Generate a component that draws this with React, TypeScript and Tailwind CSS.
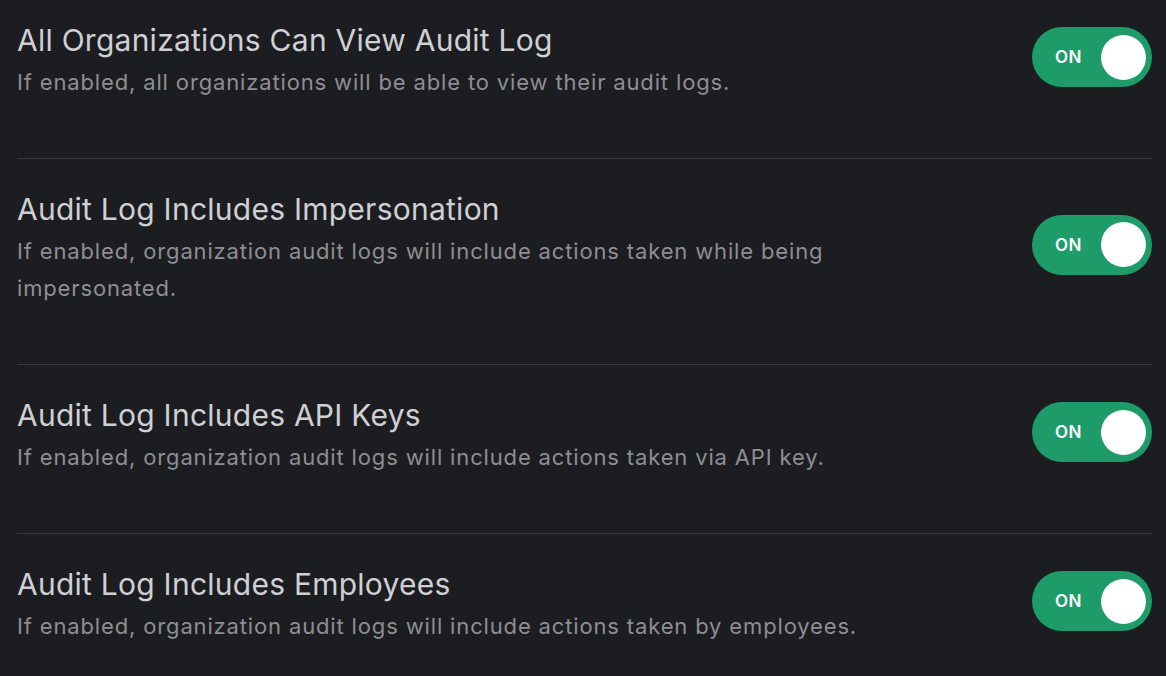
import { useState } from "react";

const SETTINGS: { title: string; description: string }[] = [
  {
    title: "All Organizations Can View Audit Log",
    description: "If enabled, all organizations will be able to view their audit logs.",
  },
  {
    title: "Audit Log Includes Impersonation",
    description:
      "If enabled, organization audit logs will include actions taken while being impersonated.",
  },
  {
    title: "Audit Log Includes API Keys",
    description: "If enabled, organization audit logs will include actions taken via API key.",
  },
  {
    title: "Audit Log Includes Employees",
    description: "If enabled, organization audit logs will include actions taken by employees.",
  },
];

function Toggle({ on, onChange }: { on: boolean; onChange: () => void }) {
  return (
    <button
      onClick={onChange}
      className={`relative flex h-[60px] w-[120px] shrink-0 items-center rounded-full transition ${
        on ? "bg-[#1d9c69]" : "bg-[#3a3b40]"
      }`}
    >
      <span
        className={`absolute top-[20px] text-[17px] leading-[20px] font-semibold tracking-[0.03em] text-white ${
          on ? "left-[23px]" : "right-[20px]"
        }`}
      >
        {on ? "ON" : "OFF"}
      </span>
      <span
        className={`absolute h-[45px] w-[45px] rounded-full bg-white transition-all ${
          on ? "left-[69px]" : "left-[7px]"
        }`}
      />
    </button>
  );
}

export default function App() {
  const [values, setValues] = useState(SETTINGS.map(() => true));

  return (
    <div
      className="min-h-screen bg-[#1c1d21] px-[17px] pt-[20px]"
      style={{ fontFamily: "Inter, 'Noto Sans', sans-serif" }}
    >
      <div className="w-[1135px]">
        {SETTINGS.map((s, i) => (
          <div
            key={s.title}
            className={`flex items-center justify-between ${
              i > 0 ? "pt-[30px]" : ""
            } ${i < SETTINGS.length - 1 ? "border-b border-[#3a3b3f] pb-[57px]" : "pb-[40px]"}`}
          >
            <div className="max-w-[880px]">
              <h3 className="text-[30px] leading-[40px] font-normal tracking-[0.25px] text-[#d0d0d4]">
                {s.title}
              </h3>
              <p className="mt-[4px] text-[22px] leading-[37px] tracking-[0.85px] text-[#8e8e93]">
                {s.description}
              </p>
            </div>
            <div className="mb-[7px]">
              <Toggle
                on={values[i]}
                onChange={() =>
                  setValues((v) => v.map((x, j) => (j === i ? !x : x)))
                }
              />
            </div>
          </div>
        ))}
      </div>
    </div>
  );
}
